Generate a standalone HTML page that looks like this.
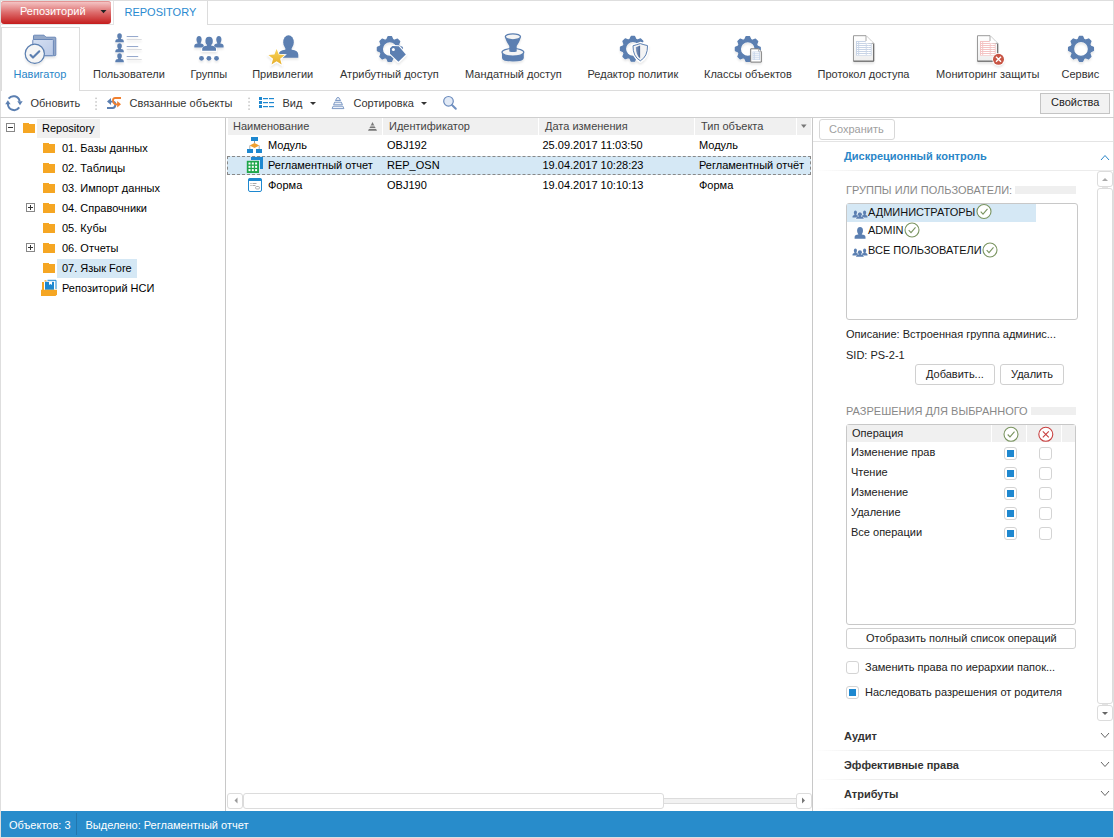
<!DOCTYPE html>
<html><head><meta charset="utf-8">
<style>
*{margin:0;padding:0;box-sizing:border-box}
html,body{width:1114px;height:838px;overflow:hidden;background:#fff;font-family:"Liberation Sans",sans-serif;font-size:11px;color:#222}
.a{position:absolute}
.t{position:absolute;white-space:nowrap;line-height:13px;font-size:11px}
.b{font-weight:bold}
svg.ov{position:absolute;left:0;top:0;overflow:visible}
</style></head><body>
<div class="a" style="left:0px;top:0px;width:1114px;height:1px;background:#dedede"></div>
<div class="a" style="left:0px;top:0px;width:1px;height:838px;background:#dedede"></div>
<div class="a" style="left:1113px;top:0px;width:1px;height:838px;background:#dedede"></div>
<div class="a" style="left:1px;top:1px;width:110px;height:23px;border-radius:3px;background:linear-gradient(#f6cccc,#dd6c6c 50%,#c41c1c);box-shadow:inset 0 1px 0 #e49494"></div>
<div class="t" style="left:20px;top:5px;color:#fff">Репозиторий</div>
<div class="a" style="left:0px;top:24px;width:113px;height:1px;background:#e4e4e4"></div>
<div class="a" style="left:113px;top:1px;width:1px;height:24px;background:#e4e4e4"></div>
<div class="a" style="left:207px;top:1px;width:1px;height:24px;background:#dcdcdc"></div>
<div class="a" style="left:207px;top:24px;width:907px;height:1px;background:#dcdcdc"></div>
<div class="t" style="left:124.5px;top:6px;color:#2a8ad0">REPOSITORY</div>
<div class="a" style="left:1px;top:27px;width:79px;height:64px;border:1px solid #dcdcdc;border-bottom:none"></div>
<div class="a" style="left:79px;top:90px;width:1035px;height:1px;background:#dcdcdc"></div>
<div class="t" style="left:13.5px;top:68px;color:#2a86c8">Навигатор</div>
<div class="t" style="left:93.0px;top:68px;color:#333">Пользователи</div>
<div class="t" style="left:190.5px;top:68px;color:#333">Группы</div>
<div class="t" style="left:252.2px;top:68px;color:#333">Привилегии</div>
<div class="t" style="left:340.0px;top:68px;color:#333">Атрибутный доступ</div>
<div class="t" style="left:465.0px;top:68px;color:#333">Мандатный доступ</div>
<div class="t" style="left:587.5px;top:68px;color:#333">Редактор политик</div>
<div class="t" style="left:704.0px;top:68px;color:#333">Классы объектов</div>
<div class="t" style="left:817.5px;top:68px;color:#333">Протокол доступа</div>
<div class="t" style="left:936.0px;top:68px;color:#333">Мониторинг защиты</div>
<div class="t" style="left:1061.5px;top:68px;color:#333">Сервис</div>
<div class="t" style="left:30.5px;top:97px;color:#333">Обновить</div>
<div class="t" style="left:129.5px;top:97px;color:#333">Связанные объекты</div>
<div class="t" style="left:282.5px;top:97px;color:#333">Вид</div>
<div class="t" style="left:353.5px;top:97px;color:#333">Сортировка</div>
<div class="a" style="left:1040px;top:93px;width:70px;height:21px;border:1px solid #c4c4c4;background:#f2f2f2"></div>
<div class="t" style="left:1051px;top:96px;color:#222">Свойства</div>
<div class="a" style="left:0px;top:117px;width:1114px;height:1px;background:#cfcfcf"></div>
<div class="a" style="left:37px;top:119px;width:63px;height:19px;background:#f0f0f0"></div>
<div class="a" style="left:57px;top:259px;width:80px;height:19px;background:#d5e8f5"></div>
<div class="t" style="left:42px;top:122px;color:#000">Repository</div>
<div class="t" style="left:62px;top:142px;color:#000">01. Базы данных</div>
<div class="t" style="left:62px;top:162px;color:#000">02. Таблицы</div>
<div class="t" style="left:62px;top:182px;color:#000">03. Импорт данных</div>
<div class="t" style="left:62px;top:202px;color:#000">04. Справочники</div>
<div class="t" style="left:62px;top:222px;color:#000">05. Кубы</div>
<div class="t" style="left:62px;top:242px;color:#000">06. Отчеты</div>
<div class="t" style="left:62px;top:262px;color:#000">07. Язык Fore</div>
<div class="t" style="left:62px;top:282px;color:#000">Репозиторий НСИ</div>
<div class="a" style="left:225px;top:118px;width:1px;height:693px;background:#c8c8c8"></div>
<div class="a" style="left:228px;top:118px;width:583px;height:17px;background:#f0f0f0"></div>
<div class="a" style="left:382px;top:118px;width:1px;height:17px;background:#fff"></div>
<div class="a" style="left:538px;top:118px;width:1px;height:17px;background:#fff"></div>
<div class="a" style="left:694px;top:118px;width:1px;height:17px;background:#fff"></div>
<div class="a" style="left:796px;top:118px;width:1px;height:17px;background:#fff"></div>
<div class="t" style="left:233px;top:120px;color:#444">Наименование</div>
<div class="t" style="left:389px;top:120px;color:#444">Идентификатор</div>
<div class="t" style="left:545px;top:120px;color:#444">Дата изменения</div>
<div class="t" style="left:701px;top:120px;color:#444">Тип объекта</div>
<div class="a" style="left:227px;top:156px;width:584px;height:19px;background:#d5e8f5;border:1px dashed #888"></div>
<div class="t" style="left:268px;top:139px;color:#000">Модуль</div>
<div class="t" style="left:387px;top:139px;color:#000">OBJ192</div>
<div class="t" style="left:542.5px;top:139px;color:#000">25.09.2017 11:03:50</div>
<div class="t" style="left:699px;top:139px;color:#000">Модуль</div>
<div class="t" style="left:268px;top:159px;color:#000">Регламентный отчет</div>
<div class="t" style="left:387px;top:159px;color:#000">REP_OSN</div>
<div class="t" style="left:542.5px;top:159px;color:#000">19.04.2017 10:28:23</div>
<div class="t" style="left:699px;top:159px;color:#000">Регламентный отчёт</div>
<div class="t" style="left:268px;top:179px;color:#000">Форма</div>
<div class="t" style="left:387px;top:179px;color:#000">OBJ190</div>
<div class="t" style="left:542.5px;top:179px;color:#000">19.04.2017 10:10:13</div>
<div class="t" style="left:699px;top:179px;color:#000">Форма</div>
<div class="a" style="left:812px;top:118px;width:1px;height:693px;background:#c8c8c8"></div>
<div class="a" style="left:663px;top:798px;width:134px;height:6px;border:1px solid #dcdcdc;background:#f2f2f2"></div>
<div class="a" style="left:227px;top:793px;width:16px;height:16px;border:1px solid #dcdcdc;border-radius:3px;background:#fff"></div>
<div class="a" style="left:243px;top:793px;width:421px;height:16px;border:1px solid #dcdcdc;border-radius:3px;background:#fff"></div>
<div class="a" style="left:796px;top:793px;width:16px;height:16px;border:1px solid #dcdcdc;border-radius:3px;background:#fff"></div>
<div class="a" style="left:812px;top:118px;width:1px;height:693px;background:#c8c8c8"></div>
<div class="a" style="left:819px;top:119px;width:76px;height:21px;border:1px solid #d8d8d8;border-radius:3px"></div>
<div class="t" style="left:829px;top:123px;color:#a0a0a0">Сохранить</div>
<div class="a" style="left:813px;top:141px;width:300px;height:1px;background:#e4e4e4"></div>
<div class="t" style="left:844px;top:150px;color:#2a86c8;font-weight:bold">Дискреционный контроль</div>
<div class="a" style="left:813px;top:170px;width:300px;height:1px;background:linear-gradient(90deg,#fff,#ececec 20%)"></div>
<div class="t" style="left:846px;top:184px;color:#888">ГРУППЫ ИЛИ ПОЛЬЗОВАТЕЛИ:</div>
<div class="a" style="left:1015px;top:186px;width:61px;height:8px;background:#efefef"></div>
<div class="a" style="left:846px;top:203px;width:232px;height:117px;border:1px solid #c8c8c8;border-radius:3px"></div>
<div class="a" style="left:847px;top:204px;width:189px;height:18px;background:#d5e8f5"></div>
<div class="t" style="left:868px;top:206px;color:#111">АДМИНИСТРАТОРЫ</div>
<div class="t" style="left:868px;top:224px;color:#111">ADMIN</div>
<div class="t" style="left:868px;top:244px;color:#111">ВСЕ ПОЛЬЗОВАТЕЛИ</div>
<div class="t" style="left:846px;top:328px;color:#222">Описание: Встроенная группа админис...</div>
<div class="t" style="left:846px;top:349px;color:#222">SID: PS-2-1</div>
<div class="a" style="left:915px;top:364px;width:80px;height:21px;border:1px solid #d0d0d0;border-radius:3px"></div>
<div class="t" style="left:926px;top:368px;color:#222">Добавить...</div>
<div class="a" style="left:1000px;top:364px;width:64px;height:21px;border:1px solid #d0d0d0;border-radius:3px"></div>
<div class="t" style="left:1011px;top:368px;color:#222">Удалить</div>
<div class="t" style="left:846px;top:405px;color:#888">РАЗРЕШЕНИЯ ДЛЯ ВЫБРАННОГО</div>
<div class="a" style="left:1031px;top:407px;width:45px;height:8px;background:#efefef"></div>
<div class="a" style="left:846px;top:424px;width:230px;height:201px;border:1px solid #c8c8c8;border-radius:3px"></div>
<div class="a" style="left:847px;top:425px;width:228px;height:17px;background:#f0f0f0"></div>
<div class="a" style="left:991px;top:425px;width:1px;height:17px;background:#fff"></div>
<div class="a" style="left:1026px;top:425px;width:1px;height:17px;background:#fff"></div>
<div class="a" style="left:1061px;top:425px;width:1px;height:17px;background:#fff"></div>
<div class="t" style="left:852px;top:427px;color:#222">Операция</div>
<div class="t" style="left:851px;top:446px;color:#222">Изменение прав</div>
<div class="a" style="left:1004px;top:447px;width:13px;height:13px;border:1px solid #d4d4d4;border-radius:3px;background:#fff"></div>
<div class="a" style="left:1007px;top:450px;width:7px;height:7px;background:#1e88d0"></div>
<div class="a" style="left:1039px;top:447px;width:13px;height:13px;border:1px solid #d4d4d4;border-radius:3px;background:#fff"></div>
<div class="t" style="left:851px;top:466px;color:#222">Чтение</div>
<div class="a" style="left:1004px;top:467px;width:13px;height:13px;border:1px solid #d4d4d4;border-radius:3px;background:#fff"></div>
<div class="a" style="left:1007px;top:470px;width:7px;height:7px;background:#1e88d0"></div>
<div class="a" style="left:1039px;top:467px;width:13px;height:13px;border:1px solid #d4d4d4;border-radius:3px;background:#fff"></div>
<div class="t" style="left:851px;top:486px;color:#222">Изменение</div>
<div class="a" style="left:1004px;top:487px;width:13px;height:13px;border:1px solid #d4d4d4;border-radius:3px;background:#fff"></div>
<div class="a" style="left:1007px;top:490px;width:7px;height:7px;background:#1e88d0"></div>
<div class="a" style="left:1039px;top:487px;width:13px;height:13px;border:1px solid #d4d4d4;border-radius:3px;background:#fff"></div>
<div class="t" style="left:851px;top:506px;color:#222">Удаление</div>
<div class="a" style="left:1004px;top:507px;width:13px;height:13px;border:1px solid #d4d4d4;border-radius:3px;background:#fff"></div>
<div class="a" style="left:1007px;top:510px;width:7px;height:7px;background:#1e88d0"></div>
<div class="a" style="left:1039px;top:507px;width:13px;height:13px;border:1px solid #d4d4d4;border-radius:3px;background:#fff"></div>
<div class="t" style="left:851px;top:526px;color:#222">Все операции</div>
<div class="a" style="left:1004px;top:527px;width:13px;height:13px;border:1px solid #d4d4d4;border-radius:3px;background:#fff"></div>
<div class="a" style="left:1007px;top:530px;width:7px;height:7px;background:#1e88d0"></div>
<div class="a" style="left:1039px;top:527px;width:13px;height:13px;border:1px solid #d4d4d4;border-radius:3px;background:#fff"></div>
<div class="a" style="left:846px;top:628px;width:230px;height:21px;border:1px solid #d0d0d0;border-radius:3px"></div>
<div class="t" style="left:866px;top:632px;color:#222">Отобразить полный список операций</div>
<div class="a" style="left:846px;top:661px;width:13px;height:13px;border:1px solid #d4d4d4;border-radius:3px"></div>
<div class="t" style="left:865px;top:661px;color:#222">Заменить права по иерархии папок...</div>
<div class="a" style="left:846px;top:686px;width:13px;height:13px;border:1px solid #d4d4d4;border-radius:3px"></div>
<div class="a" style="left:849px;top:689px;width:7px;height:7px;background:#1e88d0"></div>
<div class="t" style="left:865px;top:686px;color:#222">Наследовать разрешения от родителя</div>
<div class="a" style="left:1102px;top:186px;width:6px;height:3px;background:#e4e4e4"></div>
<div class="a" style="left:1102px;top:702px;width:6px;height:4px;background:#e4e4e4"></div>
<div class="a" style="left:1097px;top:171px;width:16px;height:16px;border:1px solid #dcdcdc;border-radius:3px;background:#fff"></div>
<div class="a" style="left:1097px;top:188px;width:16px;height:516px;border:1px solid #dcdcdc;border-radius:3px;background:#fff"></div>
<div class="a" style="left:1097px;top:705px;width:16px;height:16px;border:1px solid #dcdcdc;border-radius:3px;background:#fff"></div>
<div class="t" style="left:844px;top:730px;color:#333;font-weight:bold">Аудит</div>
<div class="a" style="left:813px;top:750px;width:300px;height:1px;background:linear-gradient(90deg,#fff,#ececec 20%)"></div>
<div class="t" style="left:844px;top:759px;color:#333;font-weight:bold">Эффективные права</div>
<div class="a" style="left:813px;top:779px;width:300px;height:1px;background:linear-gradient(90deg,#fff,#ececec 20%)"></div>
<div class="t" style="left:844px;top:788px;color:#333;font-weight:bold">Атрибуты</div>
<div class="a" style="left:813px;top:808px;width:300px;height:1px;background:linear-gradient(90deg,#fff,#ececec 20%)"></div>
<div class="a" style="left:1px;top:811px;width:1112px;height:26px;background:#288ccb"></div>
<div class="a" style="left:0px;top:837px;width:1114px;height:1px;background:#dedede"></div>
<div class="t" style="left:9px;top:819px;color:#fff">Объектов: 3</div>
<div class="a" style="left:76px;top:813px;width:1px;height:22px;background:#2276ad"></div>
<div class="t" style="left:85.5px;top:819px;color:#fff">Выделено: Регламентный отчет</div>
<svg class="ov" width="1114" height="838"><path d="M100.5,10 H106.5 L103.5,13.2 Z" fill="#222"/><defs><filter id="sh" x="-5%" y="-30%" width="110%" height="180%"><feGaussianBlur in="SourceAlpha" stdDeviation="1.3"/><feOffset dy="1.8"/><feComponentTransfer><feFuncA type="linear" slope="0.10"/></feComponentTransfer><feMerge><feMergeNode/><feMergeNode in="SourceGraphic"/></feMerge></filter></defs><g filter="url(#sh)"><path d="M33.5,38 V35.8 Q33.5,35.2 34.2,35.2 H44 L46,37.2 H55 Q55.8,37.2 55.8,38 V55 Q55.8,55.7 55,55.7 H34 Z" fill="#94a8c8" stroke="#6b88b8" stroke-width="1"/><defs><linearGradient id="fg" x1="0" y1="0" x2="1" y2="1"><stop offset="0" stop-color="#d6e0f2"/><stop offset="1" stop-color="#b8c8e6"/></linearGradient></defs><rect x="32.8" y="39.5" width="20.6" height="16.2" rx="0.8" fill="url(#fg)" stroke="#6b88b8" stroke-width="1"/><circle cx="34.8" cy="53.8" r="9.6" fill="#f5f5f5" stroke="#5b7fb0" stroke-width="1.2"/><path d="M30.5,55 L33,57.6 L39.3,51.3" fill="none" stroke="#5b7fb0" stroke-width="2.1" stroke-linecap="round" stroke-linejoin="round"/><ellipse cx="119.55" cy="36.06" rx="2.29" ry="2.76" fill="#5b7fb1" /><path d="M115.30,42.20 V40.95 Q115.30,39.17 118.19,39.00 V37.75 H120.91 V39.00 Q123.80,39.17 123.80,40.95 V42.20 Z" fill="#5b7fb1" /><rect x="126.7" y="36" width="11.5" height="1" fill="#7c94c0" opacity="0.8"/><rect x="126.7" y="39" width="15" height="1" fill="#dcdde0"/><ellipse cx="119.55" cy="46.06" rx="2.29" ry="2.76" fill="#5b7fb1" /><path d="M115.30,52.20 V50.95 Q115.30,49.17 118.19,49.00 V47.75 H120.91 V49.00 Q123.80,49.17 123.80,50.95 V52.20 Z" fill="#5b7fb1" /><rect x="126.7" y="46" width="11.5" height="1" fill="#7c94c0" opacity="0.8"/><rect x="126.7" y="49" width="15" height="1" fill="#dcdde0"/><ellipse cx="119.55" cy="56.06" rx="2.29" ry="2.76" fill="#5b7fb1" /><path d="M115.30,62.20 V60.95 Q115.30,59.17 118.19,59.00 V57.75 H120.91 V59.00 Q123.80,59.17 123.80,60.95 V62.20 Z" fill="#5b7fb1" /><rect x="126.7" y="56" width="11.5" height="1" fill="#7c94c0" opacity="0.8"/><rect x="126.7" y="59" width="15" height="1" fill="#dcdde0"/><ellipse cx="199.05" cy="39.53" rx="2.57" ry="3.63" fill="#5b7fb1" /><path d="M194.30,47.60 V45.96 Q194.30,43.62 197.53,43.39 V41.75 H200.57 V43.39 Q203.80,43.62 203.80,45.96 V47.60 Z" fill="#5b7fb1" /><ellipse cx="218.85" cy="39.53" rx="2.57" ry="3.63" fill="#5b7fb1" /><path d="M214.10,47.60 V45.96 Q214.10,43.62 217.33,43.39 V41.75 H220.37 V43.39 Q223.60,43.62 223.60,45.96 V47.60 Z" fill="#5b7fb1" /><ellipse cx="209.10" cy="40.73" rx="4.27" ry="4.93" fill="#fff" /><path d="M201.20,51.70 V49.47 Q201.20,46.29 206.57,45.98 V43.75 H211.63 V45.98 Q217.00,46.29 217.00,49.47 V51.70 Z" fill="#fff" /><ellipse cx="209.10" cy="41.11" rx="3.73" ry="4.31" fill="#5b7fb1" /><path d="M202.20,50.70 V48.75 Q202.20,45.97 206.89,45.70 V43.75 H211.31 V45.70 Q216.00,45.97 216.00,48.75 V50.70 Z" fill="#5b7fb1" /><circle cx="201.5" cy="58.3" r="2.4" fill="#5b7fb1"/><circle cx="208.9" cy="58.3" r="2.4" fill="#5b7fb1"/><circle cx="216.5" cy="58.3" r="2.4" fill="#5b7fb1"/><ellipse cx="288.50" cy="42.21" rx="5.29" ry="7.01" fill="#5b7fb1" /><path d="M278.70,57.80 V54.64 Q278.70,50.12 285.36,49.66 V46.50 H291.64 V49.66 Q298.30,50.12 298.30,54.64 V57.80 Z" fill="#5b7fb1" /><defs><linearGradient id="sg" x1="0" y1="0" x2="0" y2="1"><stop offset="0" stop-color="#f8d45a"/><stop offset="1" stop-color="#e6ae2a"/></linearGradient></defs><path d="M276.60,48.80 L278.89,54.44 L284.97,54.88 L280.31,58.81 L281.77,64.72 L276.60,61.50 L271.43,64.72 L272.89,58.81 L268.23,54.88 L274.31,54.44Z" fill="#fff" stroke="#fff" stroke-width="1.5"/><path d="M276.60,49.00 L278.77,54.61 L284.78,54.94 L280.12,58.74 L281.65,64.56 L276.60,61.30 L271.55,64.56 L273.08,58.74 L268.42,54.94 L274.43,54.61Z" fill="url(#sg)"/><path d="M386.87,39.54 L388.18,36.61 L391.42,36.61 L392.73,39.54 L394.42,40.24 L397.42,39.09 L399.71,41.38 L398.56,44.38 L399.26,46.07 L402.19,47.38 L402.19,50.62 L399.26,51.93 L398.56,53.62 L399.71,56.62 L397.42,58.91 L394.42,57.76 L392.73,58.46 L391.42,61.39 L388.18,61.39 L386.87,58.46 L385.18,57.76 L382.18,58.91 L379.89,56.62 L381.04,53.62 L380.34,51.93 L377.41,50.62 L377.41,47.38 L380.34,46.07 L381.04,44.38 L379.89,41.38 L382.18,39.09 L385.18,40.24Z M397.30,49.00 A7.5,7.5 0 1 0 382.30,49.00 A7.5,7.5 0 1 0 397.30,49.00Z" fill="#5b7fb1" fill-rule="evenodd" stroke="#5b7fb1" stroke-width="1.3" stroke-linejoin="round"/><path d="M390,48.2 L392.4,46 L398.8,46.3 L405.8,54.5 L398.4,61.8 L390,53.8 Z" fill="#fff" stroke="#fff" stroke-width="2.2" stroke-linejoin="round"/><path d="M390,48.2 L392.4,46 L398.8,46.3 L405.8,54.5 L398.4,61.8 L390,53.8 Z" fill="#5b7fb1"/><circle cx="393.4" cy="49.5" r="1.5" fill="#fff"/><path d="M502,52.5 V58 Q502,61.5 512.9,61.5 Q523.8,61.5 523.8,58 V52.5 Z" fill="#5b7fb1"/><ellipse cx="512.9" cy="52.3" rx="10.9" ry="3.8" fill="#f4f4f4" stroke="#5b7fb1" stroke-width="1.2"/><path d="M505.4,37 Q505.4,40.5 509.3,46 V51.4 Q512.9,52.6 516.7,51.4 V46 Q520.5,40.5 520.5,37 Z" fill="#5b7fb1"/><ellipse cx="512.9" cy="36.8" rx="7.6" ry="3" fill="#f4f4f4" stroke="#5b7fb1" stroke-width="1.3"/><path d="M629.97,39.34 L631.28,36.41 L634.52,36.41 L635.83,39.34 L637.52,40.04 L640.52,38.89 L642.81,41.18 L641.66,44.18 L642.36,45.87 L645.29,47.18 L645.29,50.42 L642.36,51.73 L641.66,53.42 L642.81,56.42 L640.52,58.71 L637.52,57.56 L635.83,58.26 L634.52,61.19 L631.28,61.19 L629.97,58.26 L628.28,57.56 L625.28,58.71 L622.99,56.42 L624.14,53.42 L623.44,51.73 L620.51,50.42 L620.51,47.18 L623.44,45.87 L624.14,44.18 L622.99,41.18 L625.28,38.89 L628.28,40.04Z M640.40,48.80 A7.5,7.5 0 1 0 625.40,48.80 A7.5,7.5 0 1 0 640.40,48.80Z" fill="#5b7fb1" fill-rule="evenodd" stroke="#5b7fb1" stroke-width="1.3" stroke-linejoin="round"/><defs><linearGradient id="shg" x1="0" y1="0" x2="1" y2="0"><stop offset="0" stop-color="#8098c0"/><stop offset="1" stop-color="#4a6898"/></linearGradient></defs><path d="M632.4,45.5 Q640,43 640.3,42.8 Q645,44.5 648.1,45 Q648.5,57 640.3,61.5 Q632,57 632.4,45.5 Z" fill="#fff" stroke="#fff" stroke-width="2"/><path d="M633,45.8 Q637,44.6 640.3,43.6 Q644,44.8 647.5,45.6 Q647.8,56.5 640.3,60.8 Q632.8,56.5 633,45.8 Z" fill="#f4f4f4" stroke="#5b7fb1" stroke-width="1"/><path d="M635.8,47.3 L640.1,45.5 V58.3 Q636,55.5 635.8,47.3 Z" fill="url(#shg)"/><path d="M744.87,39.54 L746.18,36.61 L749.42,36.61 L750.73,39.54 L752.42,40.24 L755.42,39.09 L757.71,41.38 L756.56,44.38 L757.26,46.07 L760.19,47.38 L760.19,50.62 L757.26,51.93 L756.56,53.62 L757.71,56.62 L755.42,58.91 L752.42,57.76 L750.73,58.46 L749.42,61.39 L746.18,61.39 L744.87,58.46 L743.18,57.76 L740.18,58.91 L737.89,56.62 L739.04,53.62 L738.34,51.93 L735.41,50.62 L735.41,47.38 L738.34,46.07 L739.04,44.38 L737.89,41.38 L740.18,39.09 L743.18,40.24Z M755.30,49.00 A7.5,7.5 0 1 0 740.30,49.00 A7.5,7.5 0 1 0 755.30,49.00Z" fill="#5b7fb1" fill-rule="evenodd" stroke="#5b7fb1" stroke-width="1.3" stroke-linejoin="round"/><path d="M750.7,48.8 H758.5 L761.3,51.6 V62.1 H750.7 Z" fill="#fff" stroke="#777" stroke-width="1"/><path d="M758.5,48.8 V51.6 H761.3" fill="#f0f0f0" stroke="#aaa" stroke-width="0.8"/><rect x="752.5" y="51.5" width="7.5" height="8.5" fill="#c8d6ea"/><rect x="753.3" y="52.3" width="1" height="1" fill="#fff"/><rect x="755" y="52.3" width="4.2" height="1" fill="#fff"/><rect x="753.3" y="54.3" width="1" height="1" fill="#fff"/><rect x="755" y="54.3" width="4.2" height="1" fill="#fff"/><rect x="753.3" y="56.3" width="1" height="1" fill="#fff"/><rect x="755" y="56.3" width="4.2" height="1" fill="#fff"/><rect x="753.3" y="58.3" width="1" height="1" fill="#fff"/><rect x="755" y="58.3" width="4.2" height="1" fill="#fff"/><defs><linearGradient id="dg853" x1="0" y1="0" x2="0" y2="1"><stop offset="0" stop-color="#fff"/><stop offset="1" stop-color="#eeeeee"/></linearGradient></defs><path d="M853.5,35.7 H866 L873.7,43.4 V61.2 H853.5 Z" fill="url(#dg853)" stroke="#9a9a9a" stroke-width="1"/><path d="M873.7,43.4 V61.2 H853.5" fill="none" stroke="#666" stroke-width="1"/><path d="M866,35.7 V43.4 H873.7" fill="#fff" stroke="#aaa" stroke-width="1"/><rect x="856" y="41" width="12.6" height="14.6" fill="#c8d4e6"/><rect x="865.8" y="41" width="5.8" height="2.3" fill="#fff"/><rect x="868.6" y="43.3" width="3" height="12.3" fill="#c8d4e6"/><rect x="857" y="42" width="1.2" height="1" fill="#fff"/><rect x="859.2" y="42" width="6.6" height="1" fill="#fff"/><rect x="866.6" y="42" width="4.2" height="1" fill="#fff"/><rect x="857" y="44" width="1.2" height="1" fill="#fff"/><rect x="859.2" y="44" width="6.6" height="1" fill="#fff"/><rect x="866.6" y="44" width="4.2" height="1" fill="#fff"/><rect x="857" y="46" width="1.2" height="1" fill="#fff"/><rect x="859.2" y="46" width="6.6" height="1" fill="#fff"/><rect x="866.6" y="46" width="4.2" height="1" fill="#fff"/><rect x="857" y="48" width="1.2" height="1" fill="#fff"/><rect x="859.2" y="48" width="6.6" height="1" fill="#fff"/><rect x="866.6" y="48" width="4.2" height="1" fill="#fff"/><rect x="857" y="50" width="1.2" height="1" fill="#fff"/><rect x="859.2" y="50" width="6.6" height="1" fill="#fff"/><rect x="866.6" y="50" width="4.2" height="1" fill="#fff"/><rect x="857" y="52" width="1.2" height="1" fill="#fff"/><rect x="859.2" y="52" width="6.6" height="1" fill="#fff"/><rect x="866.6" y="52" width="4.2" height="1" fill="#fff"/><rect x="857" y="54" width="1.2" height="1" fill="#fff"/><rect x="859.2" y="54" width="6.6" height="1" fill="#fff"/><rect x="866.6" y="54" width="4.2" height="1" fill="#fff"/><defs><linearGradient id="dg977" x1="0" y1="0" x2="0" y2="1"><stop offset="0" stop-color="#fff"/><stop offset="1" stop-color="#eeeeee"/></linearGradient></defs><path d="M977.5,35.7 H990 L997.7,43.4 V61.2 H977.5 Z" fill="url(#dg977)" stroke="#9a9a9a" stroke-width="1"/><path d="M997.7,43.4 V61.2 H977.5" fill="none" stroke="#666" stroke-width="1"/><path d="M990,35.7 V43.4 H997.7" fill="#fff" stroke="#aaa" stroke-width="1"/><rect x="980" y="41" width="12.6" height="14.6" fill="#f4c4c4"/><rect x="989.8" y="41" width="5.8" height="2.3" fill="#fff"/><rect x="992.6" y="43.3" width="3" height="12.3" fill="#f4c4c4"/><rect x="981" y="42" width="1.2" height="1" fill="#fff"/><rect x="983.2" y="42" width="6.6" height="1" fill="#fff"/><rect x="990.6" y="42" width="4.2" height="1" fill="#fff"/><rect x="981" y="44" width="1.2" height="1" fill="#fff"/><rect x="983.2" y="44" width="6.6" height="1" fill="#fff"/><rect x="990.6" y="44" width="4.2" height="1" fill="#fff"/><rect x="981" y="46" width="1.2" height="1" fill="#fff"/><rect x="983.2" y="46" width="6.6" height="1" fill="#fff"/><rect x="990.6" y="46" width="4.2" height="1" fill="#fff"/><rect x="981" y="48" width="1.2" height="1" fill="#fff"/><rect x="983.2" y="48" width="6.6" height="1" fill="#fff"/><rect x="990.6" y="48" width="4.2" height="1" fill="#fff"/><rect x="981" y="50" width="1.2" height="1" fill="#fff"/><rect x="983.2" y="50" width="6.6" height="1" fill="#fff"/><rect x="990.6" y="50" width="4.2" height="1" fill="#fff"/><rect x="981" y="52" width="1.2" height="1" fill="#fff"/><rect x="983.2" y="52" width="6.6" height="1" fill="#fff"/><rect x="990.6" y="52" width="4.2" height="1" fill="#fff"/><rect x="981" y="54" width="1.2" height="1" fill="#fff"/><rect x="983.2" y="54" width="6.6" height="1" fill="#fff"/><rect x="990.6" y="54" width="4.2" height="1" fill="#fff"/><circle cx="998.5" cy="59.3" r="6.2" fill="#fff"/><circle cx="998.5" cy="59.3" r="5.5" fill="#c85545"/><path d="M996,56.8 L1001,61.8 M1001,56.8 L996,61.8" stroke="#fff" stroke-width="1.4"/><path d="M1078.07,39.44 L1079.38,36.51 L1082.62,36.51 L1083.93,39.44 L1085.62,40.14 L1088.62,38.99 L1090.91,41.28 L1089.76,44.28 L1090.46,45.97 L1093.39,47.28 L1093.39,50.52 L1090.46,51.83 L1089.76,53.52 L1090.91,56.52 L1088.62,58.81 L1085.62,57.66 L1083.93,58.36 L1082.62,61.29 L1079.38,61.29 L1078.07,58.36 L1076.38,57.66 L1073.38,58.81 L1071.09,56.52 L1072.24,53.52 L1071.54,51.83 L1068.61,50.52 L1068.61,47.28 L1071.54,45.97 L1072.24,44.28 L1071.09,41.28 L1073.38,38.99 L1076.38,40.14Z M1088.50,48.90 A7.5,7.5 0 1 0 1073.50,48.90 A7.5,7.5 0 1 0 1088.50,48.90Z" fill="#5b7fb1" fill-rule="evenodd" stroke="#5b7fb1" stroke-width="1.3" stroke-linejoin="round"/></g><path d="M8.6,98.6 A6.2,6.2 0 0 1 19.6,101.2" fill="none" stroke="#5b7fb1" stroke-width="2"/><path d="M17.3,101.3 H22.7 L20,105.3 Z" fill="#5b7fb1"/><path d="M19.2,107.4 A6.2,6.2 0 0 1 7.9,104" fill="none" stroke="#5b7fb1" stroke-width="2"/><path d="M5.2,104.3 H10.6 L7.9,100.3 Z" fill="#5b7fb1"/><path d="M107,101.5 L111,97.9 V105 Z" fill="#5b7fb1"/><path d="M110,101.6 H113.2 Q115.4,102 115.4,104.6 Q115.2,107.9 112.6,108 H107" fill="none" stroke="#5b7fb1" stroke-width="1.9"/><path d="M121,104.3 L117.2,101 V107.6 Z" fill="#f08030"/><path d="M121,98 H115.2 Q113.2,98 113,100.2 Q113,103 115.4,104.3 H118" fill="none" stroke="#f08030" stroke-width="1.8"/><rect x="95.3" y="97.6" width="1.5" height="1.5" fill="#c4c4c4"/><rect x="248.3" y="97.6" width="1.5" height="1.5" fill="#c4c4c4"/><rect x="95.3" y="101.19999999999999" width="1.5" height="1.5" fill="#c4c4c4"/><rect x="248.3" y="101.19999999999999" width="1.5" height="1.5" fill="#c4c4c4"/><rect x="95.3" y="104.8" width="1.5" height="1.5" fill="#c4c4c4"/><rect x="248.3" y="104.8" width="1.5" height="1.5" fill="#c4c4c4"/><rect x="95.3" y="108.39999999999999" width="1.5" height="1.5" fill="#c4c4c4"/><rect x="248.3" y="108.39999999999999" width="1.5" height="1.5" fill="#c4c4c4"/><rect x="259" y="97" width="3" height="3" fill="#1e88d0"/><rect x="263" y="98" width="5" height="1.2" fill="#1e88d0"/><rect x="269" y="98" width="5" height="1.2" fill="#1e88d0"/><rect x="259" y="101" width="3" height="3" fill="#1e88d0"/><rect x="263" y="102" width="5" height="1.2" fill="#1e88d0"/><rect x="269" y="102" width="5" height="1.2" fill="#1e88d0"/><rect x="259" y="105" width="3" height="3" fill="#1e88d0"/><rect x="263" y="106" width="5" height="1.2" fill="#1e88d0"/><rect x="269" y="106" width="5" height="1.2" fill="#1e88d0"/><path d="M310,102 H316 L313,105 Z" fill="#333"/><path d="M421,102 H427 L424,105 Z" fill="#333"/><path d="M337.3,97.5 H338.7 L340.6,100.5 H335.4 Z" fill="#e4ebf6" stroke="#7090c0" stroke-width="0.9"/><path d="M334.6,102.2 H341.4 L342.4,104.8 H333.6 Z" fill="#eef2f9" stroke="#7090c0" stroke-width="0.9"/><path d="M333.1,106.2 H342.9 L343.9,108.6 H332.1 Z" fill="#eef2f9" stroke="#7090c0" stroke-width="0.9"/><circle cx="448.5" cy="101.3" r="4.8" fill="#e2eaf6" stroke="#6b8bbd" stroke-width="1.2"/><path d="M452,105 L455.8,108.8" stroke="#7090c0" stroke-width="2" stroke-linecap="round"/><rect x="6.5" y="123.5" width="8" height="8" fill="#fff" stroke="#888" stroke-width="1"/><rect x="8" y="127" width="5" height="1" fill="#333"/><path d="M23,123 H29 V124 H35 V133 H23 Z" fill="#f5a623"/><path d="M43,143 H49 V144 H55 V153 H43 Z" fill="#f5a623"/><path d="M43,163 H49 V164 H55 V173 H43 Z" fill="#f5a623"/><path d="M43,183 H49 V184 H55 V193 H43 Z" fill="#f5a623"/><path d="M43,203 H49 V204 H55 V213 H43 Z" fill="#f5a623"/><path d="M43,223 H49 V224 H55 V233 H43 Z" fill="#f5a623"/><path d="M43,243 H49 V244 H55 V253 H43 Z" fill="#f5a623"/><path d="M43,263 H49 V264 H55 V273 H43 Z" fill="#f5a623"/><rect x="26.5" y="203.5" width="8" height="8" fill="#fff" stroke="#888" stroke-width="1"/><rect x="28" y="207" width="5" height="1" fill="#333"/><rect x="30" y="205" width="1" height="5" fill="#333"/><rect x="26.5" y="243.5" width="8" height="8" fill="#fff" stroke="#888" stroke-width="1"/><rect x="28" y="247" width="5" height="1" fill="#333"/><rect x="30" y="245" width="1" height="5" fill="#333"/><rect x="42" y="282" width="2" height="8" fill="#f5a623"/><rect x="44.5" y="280.3" width="2" height="1.2" fill="#f5a623"/><path d="M47.5,280.3 H56 V289" fill="none" stroke="#1e88d0" stroke-width="1"/><path d="M45,281.8 H54 V289.8 H45 Z" fill="#1e88d0"/><path d="M49,281.8 H52 V285 L50.5,284 L49,285 Z" fill="#fff"/><path d="M41,289.8 H57 V294.5 L55.5,296 H41 Z" fill="#f5a623"/><rect x="251" y="137" width="7" height="4" fill="#1e88d0"/><rect x="254" y="141" width="1" height="2" fill="#999"/><path d="M249.7,145.5 L254.5,143 L259.3,145.5 L254.5,148 Z" fill="#f0a030"/><path d="M249.8,145.5 V149 M259.2,145.5 V149" stroke="#999" stroke-width="0.8"/><rect x="247" y="149" width="6" height="4" fill="#1e88d0"/><rect x="256" y="149" width="6" height="4" fill="#1e88d0"/><path d="M251,157 H263 V169 H260 V160 H251 Z" fill="#1e88d0"/><rect x="246.8" y="160.8" width="12.2" height="12.2" fill="#1fa64a"/><rect x="248.5" y="162.5" width="2" height="2" fill="#fff"/><rect x="248.5" y="165.8" width="2" height="2" fill="#fff"/><rect x="248.5" y="169.1" width="2" height="2" fill="#fff"/><rect x="251.8" y="162.5" width="2" height="2" fill="#fff"/><rect x="251.8" y="165.8" width="2" height="2" fill="#fff"/><rect x="251.8" y="169.1" width="2" height="2" fill="#fff"/><rect x="255.1" y="162.5" width="2" height="2" fill="#fff"/><rect x="255.1" y="165.8" width="2" height="2" fill="#fff"/><rect x="255.1" y="169.1" width="2" height="2" fill="#fff"/><rect x="248.5" y="178.5" width="13" height="13" rx="1.5" fill="#fff" stroke="#1e88d0" stroke-width="1"/><rect x="248.5" y="178.5" width="13" height="2.5" fill="#1e88d0"/><rect x="250.5" y="183" width="1" height="1" fill="#999"/><rect x="252.5" y="183" width="4" height="1" fill="#aaa"/><rect x="250.5" y="185" width="1" height="1" fill="#999"/><rect x="252.5" y="185" width="3" height="1" fill="#aaa"/><rect x="255.5" y="186.5" width="4" height="2.5" rx="1.2" fill="none" stroke="#999" stroke-width="0.8"/><path d="M372.5,122 L377,130.7 H368 Z" fill="#777"/><rect x="368" y="125.5" width="9" height="0.9" fill="#f0f0f0"/><rect x="368" y="128" width="9" height="0.9" fill="#f0f0f0"/><path d="M801,124.5 H806.6 L803.8,128 Z" fill="#777"/><path d="M237.5,797.5 V803.5 L234.5,800.5 Z" fill="#999"/><path d="M802,797.5 V803.5 L805,800.5 Z" fill="#777"/><path d="M1102,181 H1108 L1105,178 Z" fill="#aaa"/><path d="M1102,712 H1108 L1105,715 Z" fill="#666"/><path d="M1101,160 L1105,155.5 L1109,160" fill="none" stroke="#2a86c8" stroke-width="1"/><path d="M1101,733 L1105,737.5 L1109,733" fill="none" stroke="#666" stroke-width="1"/><path d="M1101,762 L1105,766.5 L1109,762" fill="none" stroke="#666" stroke-width="1"/><path d="M1101,791 L1105,795.5 L1109,791" fill="none" stroke="#666" stroke-width="1"/><ellipse cx="855.40" cy="212.71" rx="1.57" ry="2.11" fill="#5b7fb1" /><path d="M852.50,217.40 V216.45 Q852.50,215.09 854.47,214.95 V214.00 H856.33 V214.95 Q858.30,215.09 858.30,216.45 V217.40 Z" fill="#5b7fb1" /><ellipse cx="864.60" cy="212.71" rx="1.57" ry="2.11" fill="#5b7fb1" /><path d="M861.70,217.40 V216.45 Q861.70,215.09 863.67,214.95 V214.00 H865.53 V214.95 Q867.50,215.09 867.50,216.45 V217.40 Z" fill="#5b7fb1" /><ellipse cx="859.90" cy="214.06" rx="2.32" ry="2.36" fill="#fff" /><path d="M855.60,219.30 V218.24 Q855.60,216.72 858.52,216.56 V215.50 H861.28 V216.56 Q864.20,216.72 864.20,218.24 V219.30 Z" fill="#fff" /><ellipse cx="859.90" cy="214.25" rx="2.05" ry="2.05" fill="#5b7fb1" /><path d="M856.10,218.80 V217.88 Q856.10,216.56 858.68,216.42 V215.50 H861.12 V216.42 Q863.70,216.56 863.70,217.88 V218.80 Z" fill="#5b7fb1" /><ellipse cx="855.40" cy="250.71" rx="1.57" ry="2.11" fill="#5b7fb1" /><path d="M852.50,255.40 V254.45 Q852.50,253.09 854.47,252.95 V252.00 H856.33 V252.95 Q858.30,253.09 858.30,254.45 V255.40 Z" fill="#5b7fb1" /><ellipse cx="864.60" cy="250.71" rx="1.57" ry="2.11" fill="#5b7fb1" /><path d="M861.70,255.40 V254.45 Q861.70,253.09 863.67,252.95 V252.00 H865.53 V252.95 Q867.50,253.09 867.50,254.45 V255.40 Z" fill="#5b7fb1" /><ellipse cx="859.90" cy="252.06" rx="2.32" ry="2.36" fill="#fff" /><path d="M855.60,257.30 V256.24 Q855.60,254.72 858.52,254.56 V253.50 H861.28 V254.56 Q864.20,254.72 864.20,256.24 V257.30 Z" fill="#fff" /><ellipse cx="859.90" cy="252.25" rx="2.05" ry="2.05" fill="#5b7fb1" /><path d="M856.10,256.80 V255.88 Q856.10,254.56 858.68,254.42 V253.50 H861.12 V254.42 Q863.70,254.56 863.70,255.88 V256.80 Z" fill="#5b7fb1" /><ellipse cx="860.05" cy="230.66" rx="2.94" ry="3.66" fill="#5b7fb1" /><path d="M854.60,238.80 V237.15 Q854.60,234.79 858.31,234.55 V232.90 H861.79 V234.55 Q865.50,234.79 865.50,237.15 V238.80 Z" fill="#5b7fb1" /><circle cx="984" cy="211.5" r="7" fill="#fff" stroke="#7a9460" stroke-width="1.1"/><path d="M980.7,211.7 L983,214.1 L987.5,208.9" fill="none" stroke="#7a9460" stroke-width="1.1"/><circle cx="912" cy="230" r="7" fill="#fff" stroke="#7a9460" stroke-width="1.1"/><path d="M908.7,230.2 L911,232.6 L915.5,227.4" fill="none" stroke="#7a9460" stroke-width="1.1"/><circle cx="990" cy="250" r="7" fill="#fff" stroke="#7a9460" stroke-width="1.1"/><path d="M986.7,250.2 L989,252.6 L993.5,247.4" fill="none" stroke="#7a9460" stroke-width="1.1"/><circle cx="1011" cy="434.3" r="7" fill="#fff" stroke="#7a9460" stroke-width="1.1"/><path d="M1007.7,434.5 L1010,436.90000000000003 L1014.5,431.7" fill="none" stroke="#7a9460" stroke-width="1.1"/><circle cx="1045.8" cy="434.3" r="7" fill="#fff" stroke="#c84040" stroke-width="1.1"/><path d="M1042.8,431.3 L1048.8,437.3 M1048.8,431.3 L1042.8,437.3" stroke="#c84040" stroke-width="1.1"/></svg>
</body></html>
